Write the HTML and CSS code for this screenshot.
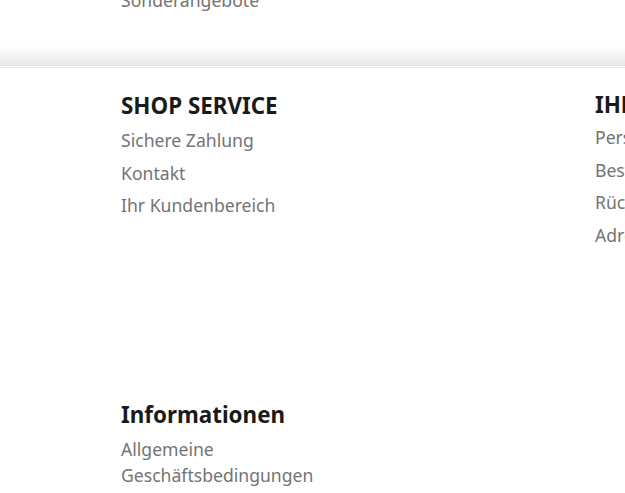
FILE: index.html
```html
<!DOCTYPE html>
<html lang="de">
<head>
    <meta charset="UTF-8">
    <meta name="viewport" content="width=device-width, initial-scale=1.0">
    <title>Shop Footer</title>
    <link rel="stylesheet" href="styles.css">
</head>
<body>
    <section class="top-links">
        <a href="#">Sonderangebote</a>
    </section>
    <footer class="shop-footer">
        <div class="footer-grid">
            <div class="footer-col">
                <h3>SHOP SERVICE</h3>
                <ul>
                    <li><a href="#">Sichere Zahlung</a></li>
                    <li><a href="#">Kontakt</a></li>
                    <li><a href="#">Ihr Kundenbereich</a></li>
                </ul>
            </div>
            <div class="footer-col account">
                <h3>IHR KONTO</h3>
                <ul>
                    <li><a href="#">Persönliche Daten</a></li>
                    <li><a href="#">Bestellungen</a></li>
                    <li><a href="#">Rücksendungen</a></li>
                    <li><a href="#">Adressen</a></li>
                </ul>
            </div>
            <div class="footer-col">
                <h3>Informationen</h3>
                <ul>
                    <li><a href="#">Allgemeine Geschäftsbedingungen</a></li>
                </ul>
            </div>
        </div>
    </footer>
</body>
</html>
```

FILE: styles.css
```css
body {
    margin: 0;
    padding: 0;
    font-family: 'Noto Sans', 'Open Sans', sans-serif;
    background-color: #ffffff;
    overflow: hidden;
}

a {
    color: #737373;
    text-decoration: none;
}

.top-links {
    display: flow-root;
    height: 67px;
    padding-left: 121px;
    font-size: 17.6px;
    line-height: 26px;
    background: linear-gradient(to bottom, #ffffff 0, #ffffff 46px, #e6e6e6 66px, #ffffff 66px);
}

.top-links a {
    display: block;
    margin-top: -13px;
}

.shop-footer {
    border-top: 1px solid #ededed;
    background-color: #ffffff;
    padding: 22px 0 0 121px;
    height: 500px;
}

.footer-grid {
    display: grid;
    grid-template-columns: 474px 474px;
    row-gap: 145px;
}

.footer-col {
    max-width: 240px;
}

.footer-col h3 {
    margin: 0 0 5px;
    font-size: 22.4px;
    line-height: 32px;
    font-weight: 700;
    color: #1a1a1a;
}

.footer-col.account {
    margin-top: -1px;
}

.footer-col.account h3 {
    margin-bottom: 3px;
}

.footer-col ul {
    list-style: none;
    margin: 0;
    padding: 0;
}

.footer-col li {
    font-size: 17.6px;
    line-height: 26px;
    margin-bottom: 6.5px;
}
```
